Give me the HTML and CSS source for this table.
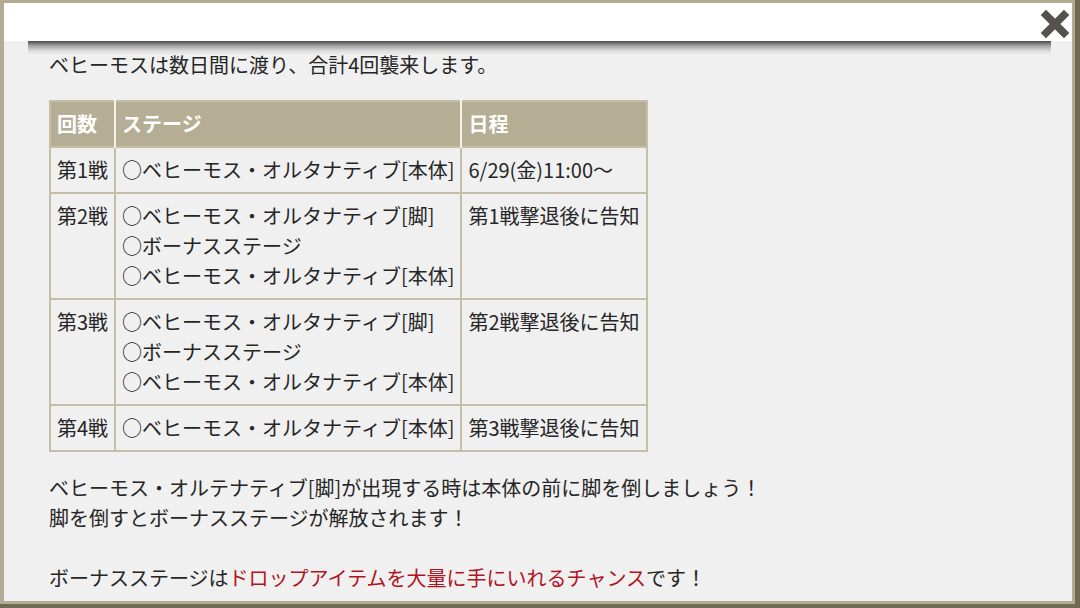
FILE: index.html
```html
<!DOCTYPE html>
<html lang="ja">
<head>
    <meta charset="UTF-8">
    <title>ベヒーモス襲来</title>
    <link rel="stylesheet" href="styles.css">
</head>
<body>
    <div class="modal">
        <div class="head"></div>
        <button class="close" aria-label="閉じる">
            <svg width="32" height="32" viewBox="0 0 32 32">
                <path d="M7 7 L25 25 M25 7 L7 25" stroke="#fff" stroke-width="12" stroke-linecap="round"/>
                <path d="M7 7 L25 25 M25 7 L7 25" stroke="#55524c" stroke-width="7.5" stroke-linecap="square"/>
            </svg>
        </button>
        <div class="shade"></div>
        <div class="content">
            <p class="lead">ベヒーモスは数日間に渡り、合計4回襲来します。</p>
            <table class="schedule">
                <tr>
                    <th>回数</th>
                    <th>ステージ</th>
                    <th>日程</th>
                </tr>
                <tr>
                    <td>第1戦</td>
                    <td>○ベヒーモス・オルタナティブ[本体]</td>
                    <td>6/29(金)11:00～</td>
                </tr>
                <tr>
                    <td>第2戦</td>
                    <td>○ベヒーモス・オルタナティブ[脚]<br>○ボーナスステージ<br>○ベヒーモス・オルタナティブ[本体]</td>
                    <td>第1戦撃退後に告知</td>
                </tr>
                <tr>
                    <td>第3戦</td>
                    <td>○ベヒーモス・オルタナティブ[脚]<br>○ボーナスステージ<br>○ベヒーモス・オルタナティブ[本体]</td>
                    <td>第2戦撃退後に告知</td>
                </tr>
                <tr>
                    <td>第4戦</td>
                    <td>○ベヒーモス・オルタナティブ[本体]</td>
                    <td>第3戦撃退後に告知</td>
                </tr>
            </table>
            <p class="note">ベヒーモス・オルテナティブ[脚]が出現する時は本体の前に脚を倒しましょう！<br>脚を倒すとボーナスステージが解放されます！<br><br>ボーナスステージは<span class="red">ドロップアイテムを大量に手にいれるチャンス</span>です！</p>
        </div>
    </div>
</body>
</html>
```

FILE: styles.css
```css
*{
    padding: 0;
    margin: 0;
    box-sizing: border-box;
}
body{
    width: 1080px;
    height: 608px;
    overflow: hidden;
    background: #6f6b52;
    font-family: "Noto Sans CJK JP", "Noto Sans", sans-serif;
    color: #262626;
}
.modal{
    position: relative;
    width: 1075px;
    height: 604px;
    border: 3px solid #b3ac93;
    border-left-width: 4px;
    background: #f0f0f0;
    overflow: hidden;
}
.head{
    height: 38px;
    background: #fff;
}
.shade{
    height: 14px;
    margin: 0 21px -5px 24px;
    background: linear-gradient(#4a4a4a, #9a9a9a 30%, #dcdcdc 70%, rgba(240,240,240,0));
}
.close{
    position: absolute;
    top: 5px;
    right: 1px;
    border: none;
    background: none;
    width: 32px;
    height: 32px;
}
.content{
    padding: 0 45px;
    font-size: 20px;
    line-height: 30px;
}
.lead{
    margin-bottom: 20px;
}
.schedule{
    border-collapse: collapse;
    border: 2px solid #c6bfa7;
    margin-bottom: 21px;
    & th{
        background: #b5ad94;
        color: #fff;
        font-weight: bold;
        text-align: left;
        padding: 7px 6px;
        border-left: 2px solid #f4f2ea;
    }
    & th:first-child{
        border-left: none;
    }
    & td{
        vertical-align: top;
        padding: 7px 6px;
        border: 2px solid #c6bfa7;
    }
}
.red{
    color: #b0141e;
}
```
